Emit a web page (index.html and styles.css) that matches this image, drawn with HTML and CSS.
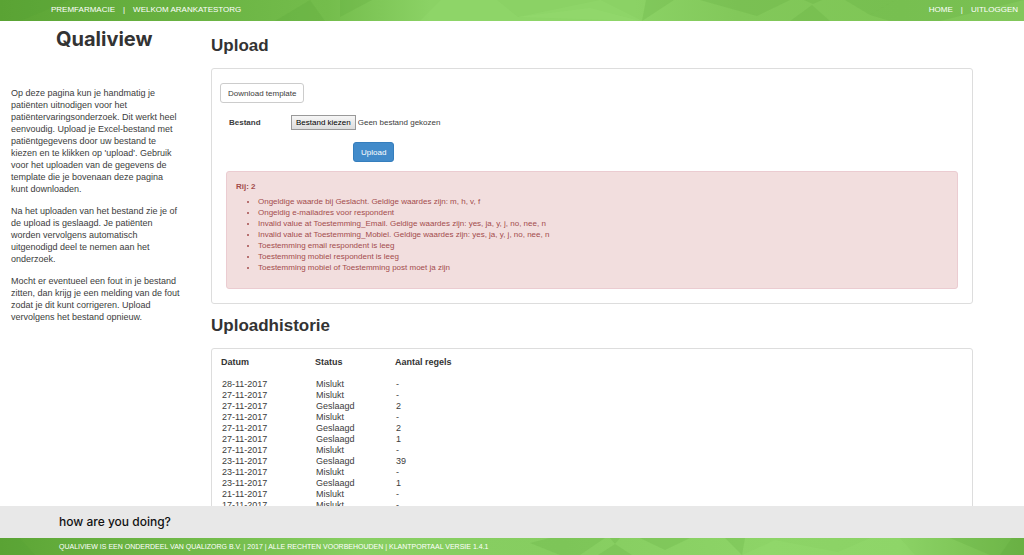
FILE: index.html
```html
<!DOCTYPE html>
<html lang="nl">
<head>
<meta charset="utf-8">
<title>Qualiview - Upload</title>
<link rel="stylesheet" href="styles.css">
</head>
<body>
<header class="topbar">
  <svg class="facets" viewBox="0 0 1024 21" preserveAspectRatio="none" aria-hidden="true">
    <g fill="#4f9a30" fill-opacity=".16">
      <path d="M0 0H70L20 21H0Z"/><path d="M340 0H372L340 17Z"/><path d="M275 21L310 0L325 21Z"/>
      <path d="M646 0H674L642 21Z"/><path d="M700 0H790L757 16Z"/><path d="M790 21L812 5L830 21Z"/>
      <path d="M804 0H822L813 4Z"/><path d="M845 0H895L870 15Z"/><path d="M870 15L895 0H1024L940 21H890Z"/>
    </g>
    <g fill="#a2e87b" fill-opacity=".16">
      <path d="M420 21L441 0H497L518 17L590 8L640 21Z"/><path d="M518 17L600 0L642 21Z"/>
    </g>
  </svg>
  <nav class="topbar-nav">
    <span>PREMFARMACIE</span><span>|</span><span>WELKOM ARANKATESTORG</span>
  </nav>
  <nav class="topbar-nav">
    <a href="#home">HOME</a><span>|</span><a href="#logout">UITLOGGEN</a>
  </nav>
</header>

<div class="page">
  <aside class="sidebar">
    <div class="logo">Qualiview</div>
    <div class="intro">
      <p>Op deze pagina kun je handmatig je patiënten uitnodigen voor het patiëntervaringsonderzoek. Dit werkt heel eenvoudig. Upload je Excel-bestand met patiëntgegevens door uw bestand te kiezen en te klikken op 'upload'. Gebruik voor het uploaden van de gegevens de template die je bovenaan deze pagina kunt downloaden.</p>
      <p>Na het uploaden van het bestand zie je of de upload is geslaagd. Je patiënten worden vervolgens automatisch uitgenodigd deel te nemen aan het onderzoek.</p>
      <p>Mocht er eventueel een fout in je bestand zitten, dan krijg je een melding van de fout zodat je dit kunt corrigeren. Upload vervolgens het bestand opnieuw.</p>
    </div>
  </aside>

  <main class="content">
    <h1 class="title">Upload</h1>
    <form class="panel upload">
      <button type="button" class="btn">Download template</button>
      <div class="field">
        <label class="field-label" for="file">Bestand</label>
        <div class="picker">
          <input class="picker-input" type="file" id="file">
          <label class="picker-button" for="file">Bestand kiezen</label>
          <span>Geen bestand gekozen</span>
        </div>
      </div>
      <button type="submit" class="btn btn-primary">Upload</button>
      <div class="alert" role="alert">
        <strong>Rij: 2</strong>
        <ul class="errors">
          <li>Ongeldige waarde bij Geslacht. Geldige waardes zijn: m, h, v, f</li>
          <li>Ongeldig e-mailadres voor respondent</li>
          <li>Invalid value at Toestemming_Email. Geldige waardes zijn: yes, ja, y, j, no, nee, n</li>
          <li>Invalid value at Toestemming_Mobiel. Geldige waardes zijn: yes, ja, y, j, no, nee, n</li>
          <li>Toestemming email respondent is leeg</li>
          <li>Toestemming mobiel respondent is leeg</li>
          <li>Toestemming mobiel of Toestemming post moet ja zijn</li>
        </ul>
      </div>
    </form>

    <h2 class="title">Uploadhistorie</h2>
    <section class="panel history">
      <table class="log">
        <thead><tr><th>Datum</th><th>Status</th><th>Aantal regels</th></tr></thead>
        <tbody>
          <tr><td>28-11-2017</td><td>Mislukt</td><td>-</td></tr>
          <tr><td>27-11-2017</td><td>Mislukt</td><td>-</td></tr>
          <tr><td>27-11-2017</td><td>Geslaagd</td><td>2</td></tr>
          <tr><td>27-11-2017</td><td>Mislukt</td><td>-</td></tr>
          <tr><td>27-11-2017</td><td>Geslaagd</td><td>2</td></tr>
          <tr><td>27-11-2017</td><td>Geslaagd</td><td>1</td></tr>
          <tr><td>27-11-2017</td><td>Mislukt</td><td>-</td></tr>
          <tr><td>23-11-2017</td><td>Geslaagd</td><td>39</td></tr>
          <tr><td>23-11-2017</td><td>Mislukt</td><td>-</td></tr>
          <tr><td>23-11-2017</td><td>Geslaagd</td><td>1</td></tr>
          <tr><td>21-11-2017</td><td>Mislukt</td><td>-</td></tr>
          <tr><td>17-11-2017</td><td>Mislukt</td><td>-</td></tr>
        </tbody>
      </table>
    </section>
  </main>
</div>

<footer class="footer">
  <div class="tagline">how are you doing?</div>
  <div class="legal">
    <svg class="facets" viewBox="0 0 1024 17" preserveAspectRatio="none" aria-hidden="true">
      <g fill="#4f9a30" fill-opacity=".16">
        <path d="M0 0H20L35 17H0Z"/><path d="M530 5L550 0H605L580 17H560Z"/><path d="M610 0H620L615 6Z"/>
        <path d="M598 17L615 6L632 17Z"/><path d="M640 0H690L665 12Z"/><path d="M725 0H745L742 17Z"/>
        <path d="M950 0H1024V17H990Z"/><path d="M1000 17L1012 0H1024V17Z"/>
      </g>
      <g fill="#a2e87b" fill-opacity=".16"><path d="M742 17L775 2L838 14L870 0H900L915 17Z"/></g>
    </svg>
    <span>QUALIVIEW IS EEN ONDERDEEL VAN QUALIZORG B.V. | 2017 | ALLE RECHTEN VOORBEHOUDEN | KLANTPORTAAL VERSIE 1.4.1</span>
  </div>
</footer>
</body>
</html>
```
FILE: styles.css
```css
* { box-sizing: border-box; }

body {
  display: flex;
  flex-direction: column;
  height: 100vh;
  margin: 0;
  overflow: hidden;
  background: #fff;
  color: #3c3c3c;
  font: 8px/11px "Liberation Sans", Arial, sans-serif;
}

.topbar,
.legal {
  position: relative;
  display: flex;
  flex: none;
  align-items: center;
  justify-content: space-between;
  color: #fff;
}

.topbar {
  height: 21px;
  padding: 0 6px 2px 51px;
  background: linear-gradient(90deg, #5ca535, #74bd4c 32%, #8bd265 42%, #8bd265 62%, #82c85a 72%, #7fc656 88%, #82c75b);
}

.facets {
  position: absolute;
  inset: 0;
  width: 100%;
  height: 100%;
}

.topbar-nav {
  position: relative;
  display: flex;
  gap: 8px;
}

.topbar-nav a {
  color: inherit;
  text-decoration: none;
}

.page {
  display: flex;
  flex: 1;
  min-height: 0;
  overflow-y: auto;
  scrollbar-width: none;
}

.sidebar {
  flex: none;
  width: 211px;
  padding: 4px 30px 0 11px;
}

.logo {
  padding-left: 45px;
  color: #333;
  font: bold 20px/28px Inter, sans-serif;
}

.intro {
  margin-top: 34px;
  font-size: 9px;
  line-height: 12px;
}

.intro p { margin: 0 0 10px; }

.content {
  flex: 1;
  padding: 15px 51px 0 0;
}

.title {
  margin: 0 0 12px;
  color: #333;
  font-size: 17px;
  line-height: 20px;
}

.panel {
  border: 1px solid #ddd;
  border-radius: 3px;
}

.upload {
  margin-bottom: 12px;
  padding: 14px;
}

.btn {
  display: block;
  height: 20px;
  padding: 0 7px;
  border: 1px solid #ccc;
  border-radius: 3px;
  background: #fff;
  color: #3c3c3c;
  font: inherit;
}

.upload > .btn:first-child { margin-left: -6px; }

.field {
  display: flex;
  align-items: center;
  margin: 12px 0 12px 3px;
}

.field-label {
  width: 62px;
  font-weight: bold;
}

.picker {
  display: flex;
  align-items: center;
  gap: 2px;
}

.picker-input {
  position: absolute;
  width: 1px;
  height: 1px;
  opacity: 0;
}

.picker-button {
  padding: 1px 4px;
  border: 1px solid #999;
  background: linear-gradient(#f6f6f6, #ddd);
  color: #000;
}

.btn-primary {
  margin-left: 127px;
  border-color: #357ebd;
  background: #428bca;
  color: #fff;
}

.alert {
  margin-top: 9px;
  padding: 9px 9px 15px;
  border: 1px solid #ebccd1;
  border-radius: 3px;
  background: #f2dede;
  color: #a34c4c;
}

.errors {
  margin: 4px 0 0;
  padding-left: 22px;
}

.history { padding: 8px 9px; }

.log {
  border-collapse: collapse;
  font-size: 9px;
  text-align: left;
}

.log th {
  min-width: 80px;
  padding: 0 0 11px;
  color: #333;
}

.log th:first-child { min-width: 94px; }

.log td { padding: 0 1px; }

.footer { flex: none; }

.tagline {
  padding: 2px 59px;
  background: #e8e8e8;
  color: #111;
  font: 500 12px/28px Inter, sans-serif;
}

.legal {
  height: 17px;
  padding: 0 59px;
  background: linear-gradient(90deg, #5ca535, #74bd4c 22%, #88cf62 35%, #86cd60 55%, #8dd467 75%, #8bd265 88%, #74bb4c);
  font-size: 7px;
}

.legal span { position: relative; }
```
